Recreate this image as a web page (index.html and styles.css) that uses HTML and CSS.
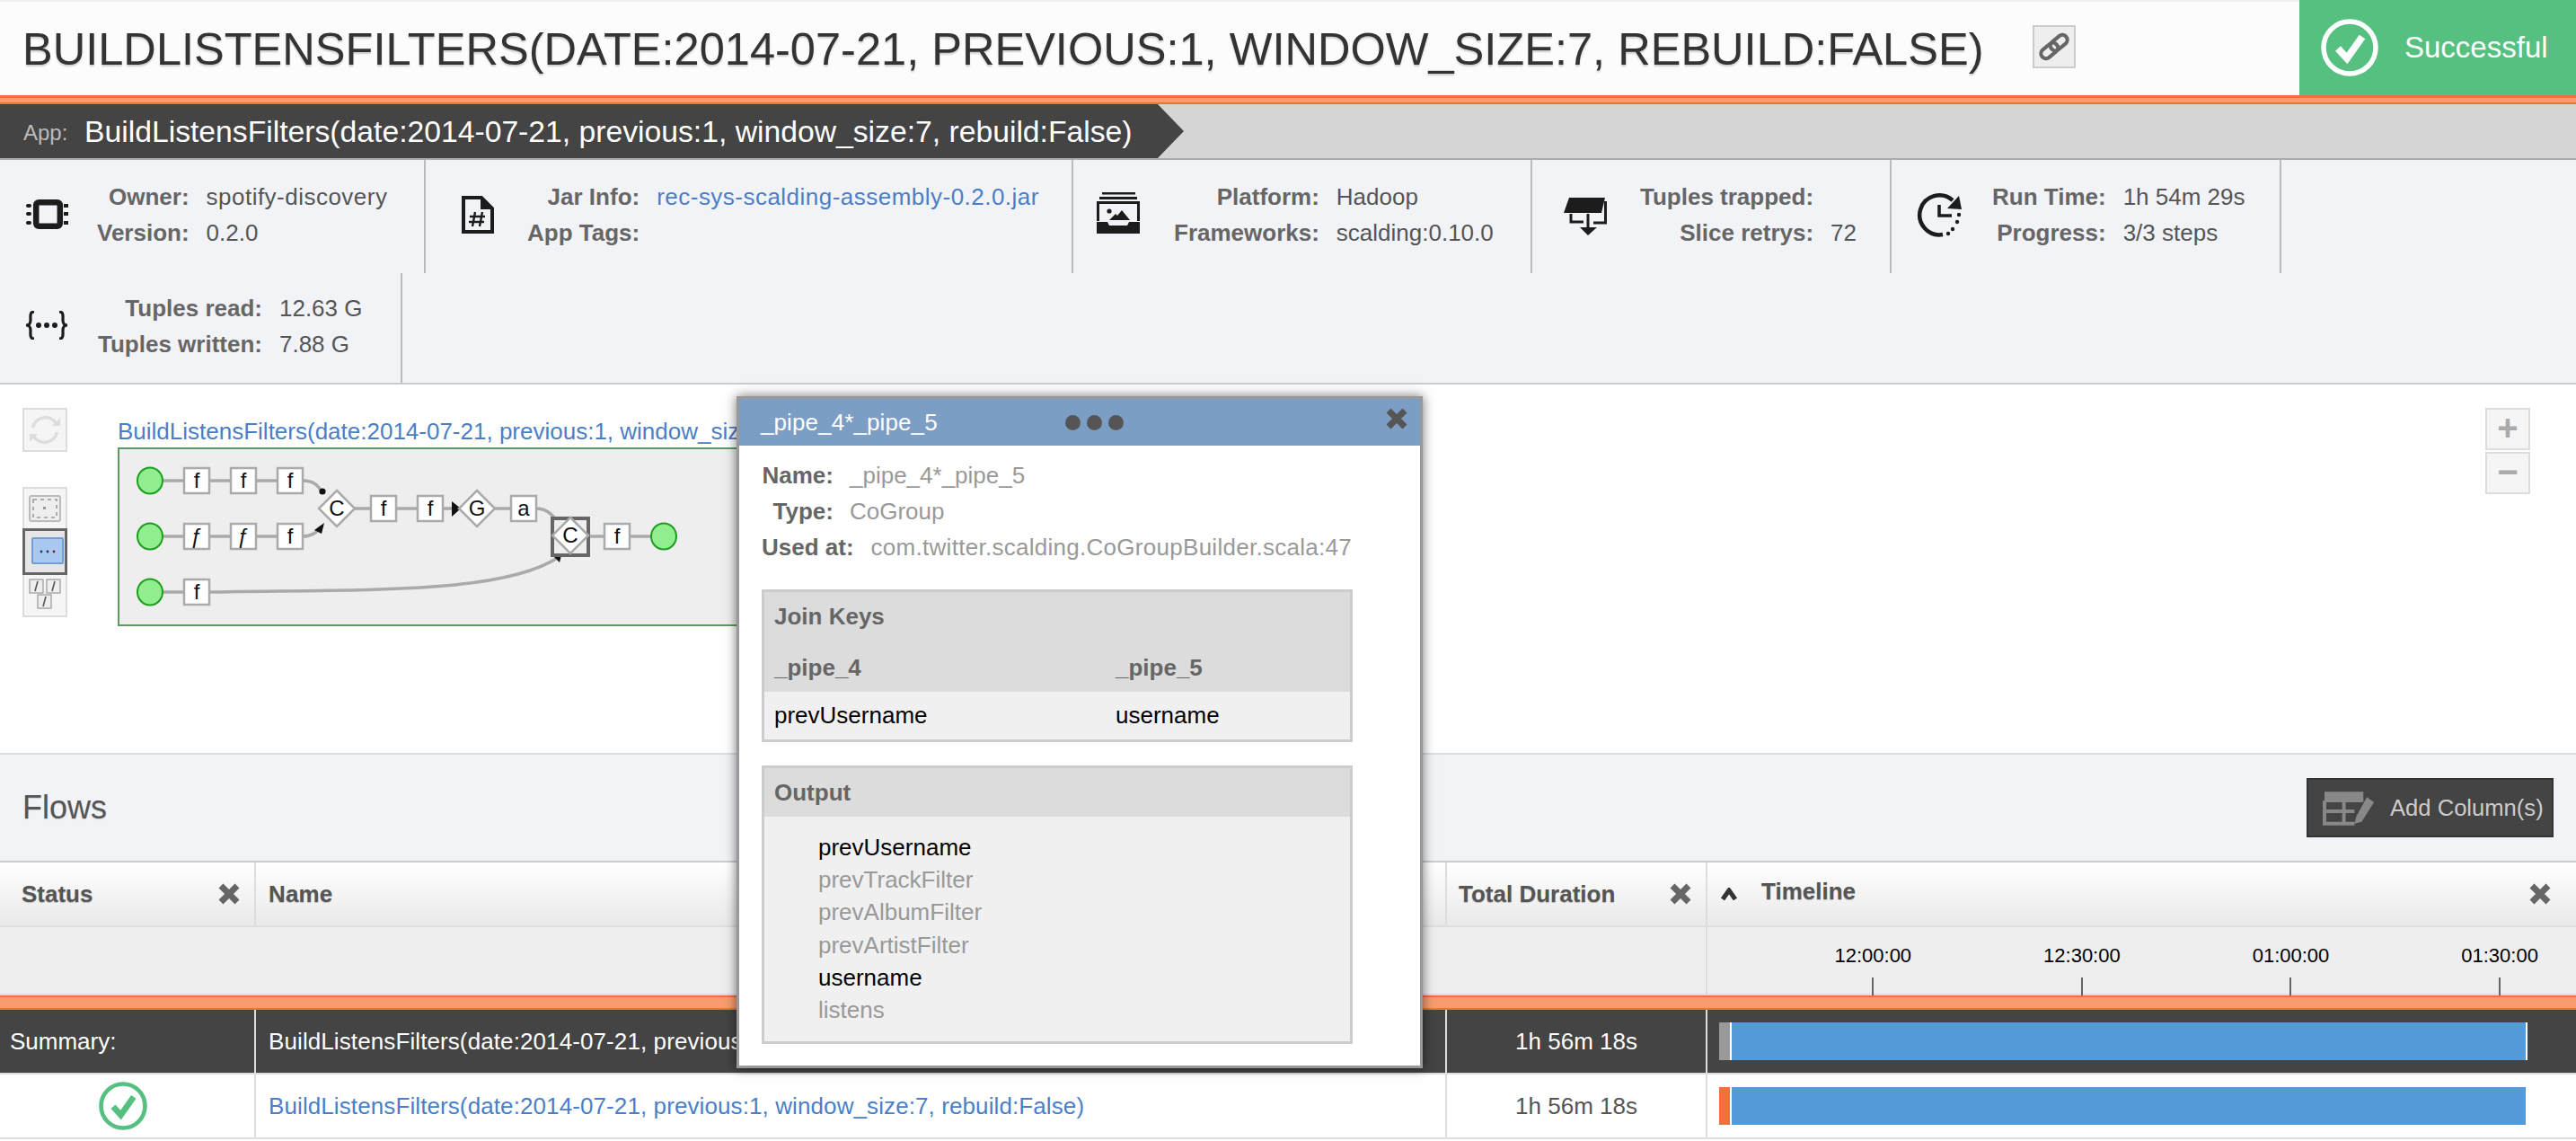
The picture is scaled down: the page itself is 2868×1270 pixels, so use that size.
FILE: index.html
```html
<!DOCTYPE html>
<html lang="en">
<head>
  <meta charset="UTF-8" />
  <title>BuildListensFilters</title>
  <link rel="stylesheet" href="styles.css">
</head>
<body>
  <svg class="defs" xmlns="http://www.w3.org/2000/svg">
    <symbol id="icon-x" viewBox="0 0 26 26">
      <path d="M4 4 L22 22 M22 4 L4 22" fill="none" stroke="currentColor" stroke-width="7"/>
    </symbol>
    <symbol id="icon-ok" viewBox="0 0 64 64">
      <circle cx="32" cy="32" r="29" fill="none" stroke="currentColor" stroke-width="5.5"/>
      <path d="M19 33 L29 44 L46 20" fill="none" stroke="currentColor" stroke-width="8"/>
    </symbol>
  </svg>

  <header class="top-bar">
    <h1 class="page-title">BuildListensFilters(date:2014-07-21, previous:1, window_size:7, rebuild:False)</h1>
    <span class="link-btn">
      <svg viewBox="0 0 48 48" xmlns="http://www.w3.org/2000/svg">
        <g fill="none" stroke="#666" stroke-width="4.5" transform="rotate(-40 24 24)">
          <rect x="5" y="18" width="23" height="12" rx="6"/>
          <rect x="20" y="18" width="23" height="12" rx="6"/>
        </g>
      </svg>
    </span>
    <div class="status-badge">
      <svg class="status-badge-icon"><use href="#icon-ok"/></svg>
      <span>Successful</span>
    </div>
  </header>
  <div class="orange-band"></div>

  <div class="app-bar">
    <div class="app-crumb">
      <span class="app-crumb-label">App:</span>
      <span class="app-crumb-name">BuildListensFilters(date:2014-07-21, previous:1, window_size:7, rebuild:False)</span>
    </div>
  </div>

  <section class="meta">
    <div class="meta-cell meta-owner">
      <svg class="meta-icon" viewBox="0 0 48 40" xmlns="http://www.w3.org/2000/svg">
        <rect x="12.2" y="7.2" width="26.6" height="26.6" rx="3" fill="none" stroke="#1c1c1c" stroke-width="6.5"/>
        <g fill="#1c1c1c">
          <rect x="1" y="9" width="6" height="4" rx="2"/><rect x="1" y="18" width="6" height="4" rx="2"/><rect x="1" y="28" width="6" height="4" rx="2"/>
          <rect x="43" y="9" width="5" height="4"/><rect x="43" y="18" width="5" height="4"/><rect x="43" y="28" width="5" height="4"/>
        </g>
      </svg>
      <dl class="meta-list">
        <dt>Owner:</dt><dd class="meta-wide">spotify-discovery</dd>
        <dt>Version:</dt><dd>0.2.0</dd>
      </dl>
    </div>
    <div class="meta-cell meta-jar">
      <svg class="meta-icon" viewBox="0 0 36 42" xmlns="http://www.w3.org/2000/svg">
        <path d="M2 2 H22 L34 14 V40 H2 Z" fill="none" stroke="#1c1c1c" stroke-width="4"/>
        <path d="M21 2 V15 H34 Z" fill="#1c1c1c"/>
        <path d="M15 18 L12 34 M23 18 L20 34 M9 23 H26 M8 29 H25" fill="none" stroke="#1c1c1c" stroke-width="2.4"/>
      </svg>
      <dl class="meta-list">
        <dt>Jar Info:</dt><dd class="meta-wide"><a class="link" href="#">rec-sys-scalding-assembly-0.2.0.jar</a></dd>
        <dt>App Tags:</dt><dd></dd>
      </dl>
    </div>
    <div class="meta-cell meta-platform">
      <svg class="meta-icon" viewBox="0 0 48 48" xmlns="http://www.w3.org/2000/svg">
        <rect x="6" y="1" width="37" height="2.5" fill="#1c1c1c"/>
        <rect x="3" y="6" width="42" height="3" fill="#1c1c1c"/>
        <path d="M1.5 33 V12.5 H46.5 V33" fill="none" stroke="#1c1c1c" stroke-width="3"/>
        <path d="M14 32 L21 25 L23 27 L28 21 L37 32 Z" fill="#1c1c1c"/>
        <circle cx="14" cy="22" r="2.6" fill="#1c1c1c"/>
        <path d="M0 34 H12 L14 38 H34 L36 34 H48 V47 H0 Z" fill="#1c1c1c"/>
      </svg>
      <dl class="meta-list">
        <dt>Platform:</dt><dd>Hadoop</dd>
        <dt>Frameworks:</dt><dd>scalding:0.10.0</dd>
      </dl>
    </div>
    <div class="meta-cell meta-trapped">
      <svg class="meta-icon" viewBox="0 0 48 44" xmlns="http://www.w3.org/2000/svg">
        <path d="M6 1 H46 L42 18 H0 Z" fill="#1c1c1c"/>
        <path d="M46.5 5 V29 H33 M8 19 V28 H22 M27 19 V35" fill="none" stroke="#1c1c1c" stroke-width="3"/>
        <path d="M18 34 H37 L27 43 Z" fill="#1c1c1c"/>
      </svg>
      <dl class="meta-list">
        <dt>Tuples trapped:</dt><dd></dd>
        <dt>Slice retrys:</dt><dd>72</dd>
      </dl>
    </div>
    <div class="meta-cell meta-time">
      <svg class="meta-icon" viewBox="0 0 50 50" xmlns="http://www.w3.org/2000/svg">
        <path d="M40 9 A22 22 0 1 0 29 47" fill="none" stroke="#1c1c1c" stroke-width="4.5"/>
        <path d="M47 4 L50 19 L34 18 Z" fill="#1c1c1c"/>
        <path d="M25 14 V26 H39" fill="none" stroke="#1c1c1c" stroke-width="3.6"/>
        <g fill="#1c1c1c"><circle cx="47" cy="25" r="2.2"/><circle cx="45" cy="33" r="2.2"/><circle cx="40" cy="41" r="2.2"/><circle cx="35" cy="46" r="2.2"/></g>
      </svg>
      <dl class="meta-list">
        <dt>Run Time:</dt><dd>1h 54m 29s</dd>
        <dt>Progress:</dt><dd>3/3 steps</dd>
      </dl>
    </div>
    <div class="meta-cell meta-tuples">
      <svg class="meta-icon" viewBox="0 0 48 32" xmlns="http://www.w3.org/2000/svg">
        <path d="M10 1 C5 1 6 6 6 10 C6 14 5 16 1 16 C5 16 6 18 6 22 C6 26 5 31 10 31" fill="none" stroke="#1c1c1c" stroke-width="3.2"/>
        <path d="M38 1 C43 1 42 6 42 10 C42 14 43 16 47 16 C43 16 42 18 42 22 C42 26 43 31 38 31" fill="none" stroke="#1c1c1c" stroke-width="3.2"/>
        <g fill="#1c1c1c"><circle cx="15" cy="16" r="3"/><circle cx="24" cy="16" r="3"/><circle cx="33" cy="16" r="3"/></g>
      </svg>
      <dl class="meta-list">
        <dt>Tuples read:</dt><dd>12.63 G</dd>
        <dt>Tuples written:</dt><dd>7.88 G</dd>
      </dl>
    </div>
  </section>

  <section class="graph-panel">
    <div class="graph-tools">
      <span class="tool-btn tool-refresh">
        <svg viewBox="0 0 50 50" xmlns="http://www.w3.org/2000/svg">
          <path d="M10 22 A16 16 0 0 1 39 17 M40 28 A16 16 0 0 1 11 33" fill="none" stroke="#ddd" stroke-width="4"/>
          <path d="M34 20 H44 V10 Z M16 30 H6 V40 Z" fill="#ddd"/>
        </svg>
      </span>
      <div class="tool-group">
        <span class="tool-view">
          <svg viewBox="0 0 36 30" xmlns="http://www.w3.org/2000/svg">
            <rect x="1" y="1" width="34" height="28" rx="2" fill="#eee" stroke="#bbb" stroke-width="2"/>
            <rect x="5" y="5" width="26" height="20" fill="none" stroke="#999" stroke-width="1.6" stroke-dasharray="4 4"/>
            <rect x="16" y="13" width="3" height="3" fill="#999"/>
          </svg>
        </span>
        <span class="tool-view tool-view-active">
          <svg viewBox="0 0 36 30" xmlns="http://www.w3.org/2000/svg">
            <rect x="1" y="1" width="34" height="28" rx="1" fill="#a9c9f0" stroke="#6f9fdb" stroke-width="2"/>
            <circle cx="11" cy="16" r="1.4" fill="#335"/><circle cx="18" cy="16" r="1.4" fill="#335"/><circle cx="25" cy="16" r="1.4" fill="#722"/>
          </svg>
        </span>
        <span class="tool-view tool-view-split">
          <svg viewBox="0 0 36 34" xmlns="http://www.w3.org/2000/svg">
            <g fill="#eee" stroke="#aaa" stroke-width="1.5">
              <rect x="1" y="1" width="15" height="15"/><rect x="20" y="1" width="15" height="15"/><rect x="10" y="18" width="15" height="15"/>
            </g>
            <path d="M10 3 L7 14 M29 3 L26 14 M19 20 L16 31" stroke="#555" stroke-width="1.6"/>
          </svg>
        </span>
      </div>
    </div>
    <div class="graph-body">
      <a class="link graph-title" href="#">BuildListensFilters(date:2014-07-21, previous:1, window_size:7, rebuild:False)</a>
      <svg class="graph" viewBox="131 498 760 200" xmlns="http://www.w3.org/2000/svg">
        <rect class="graph-box" x="132" y="499" width="758" height="197"/>
        <g class="edges">
          <path d="M181 535 H204 M233 535 H257 M285 535 H309 M337 535 C349 535 354 540 358 547"/>
          <path d="M181 597 H204 M233 597 H257 M285 597 H309 M337 597 C347 597 352 593 358 586"/>
          <path d="M181 659 H204 M233 659 C400 656 560 662 622 620"/>
          <path d="M395 566 H413 M441 566 H465 M493 566 H505 M551 566 H569 M597 566 C608 566 614 572 620 580"/>
          <path d="M655 597 H673 M701 597 H725"/>
        </g>
        <g class="edge-heads">
          <circle cx="359" cy="547" r="3.6"/>
          <path d="M361 582 L350 590 L358 594 Z"/>
          <path d="M513 566 L503 558 V575 Z"/>
          <circle cx="620" cy="580" r="3"/>
          <path d="M625 618 L616 619 L623 626 Z"/>
        </g>
        <g class="node-start">
          <ellipse cx="167" cy="535" rx="14" ry="14.5"/>
          <ellipse cx="167" cy="597" rx="14" ry="14.5"/>
          <ellipse cx="167" cy="659" rx="14" ry="14.5"/>
          <ellipse cx="739" cy="597" rx="14" ry="14.5"/>
        </g>
        <g class="node-box">
          <rect x="205" y="521" width="28" height="28"/><rect x="257" y="521" width="28" height="28"/><rect x="309" y="521" width="28" height="28"/>
          <rect x="205" y="583" width="28" height="28"/><rect x="257" y="583" width="28" height="28"/><rect x="309" y="583" width="28" height="28"/>
          <rect x="205" y="645" width="28" height="28"/>
          <rect x="413" y="552" width="28" height="28"/><rect x="465" y="552" width="28" height="28"/>
          <rect x="569" y="552" width="28" height="28"/><rect x="673" y="583" width="28" height="28"/>
        </g>
        <rect class="node-selected" x="615" y="577" width="40" height="41"/>
        <g class="node-box">
          <path d="M375 546 L395 566 L375 586 L355 566 Z"/>
          <path d="M531 546 L551 566 L531 586 L511 566 Z"/>
          <path d="M635 576 L655 596 L635 616 L615 596 Z"/>
        </g>
        <g class="node-label">
          <text x="219" y="543">f</text><text x="271" y="543">f</text><text x="323" y="543">f</text>
          <text x="219" y="605">ƒ</text><text x="271" y="605">ƒ</text><text x="323" y="605">f</text>
          <text x="219" y="667">f</text>
          <text x="375" y="574">C</text><text x="427" y="574">f</text><text x="479" y="574">f</text>
          <text x="531" y="574">G</text><text x="583" y="574">a</text>
          <text x="635" y="604">C</text><text x="687" y="605">f</text>
        </g>
      </svg>
    </div>
    <div class="zoom-tools">
      <span class="zoom-btn">+</span>
      <span class="zoom-btn">−</span>
    </div>
  </section>

  <section class="flows-head">
    <h2 class="flows-title">Flows</h2>
    <button class="add-column">
      <svg class="add-column-icon" viewBox="0 0 62 40" xmlns="http://www.w3.org/2000/svg">
        <path d="M2 2 H46 V12 H2 Z" fill="#888"/>
        <path d="M2 12 H46 M2 24 H36 M2 12 V38 H36 M24 12 V38" fill="none" stroke="#888" stroke-width="4"/>
        <path d="M50 8 L58 14 L44 36 L36 38 L38 30 Z" fill="#888"/>
      </svg>
      <span>Add Column(s)</span>
    </button>
  </section>

  <div class="flow-table">
    <div class="flow-row flow-row-head">
      <div class="flow-cell flow-cell-status"><span>Status</span><svg class="col-close"><use href="#icon-x"/></svg></div>
      <div class="flow-cell flow-cell-name"><span>Name</span></div>
      <div class="flow-cell flow-cell-duration"><span>Total Duration</span><svg class="col-close"><use href="#icon-x"/></svg></div>
      <div class="flow-cell flow-cell-timeline">
        <svg class="sort-up" viewBox="0 0 20 14" xmlns="http://www.w3.org/2000/svg"><path d="M3 13 L10 3 L17 13" fill="none" stroke="#333" stroke-width="5"/></svg>
        <span class="timeline-label">Timeline</span>
        <svg class="col-close"><use href="#icon-x"/></svg>
      </div>
    </div>
    <div class="flow-row flow-row-scale">
      <div></div><div></div><div></div>
      <div class="scale">
        <div class="scale-tick"><span>12:00:00</span><i></i></div>
        <div class="scale-tick"><span>12:30:00</span><i></i></div>
        <div class="scale-tick"><span>01:00:00</span><i></i></div>
        <div class="scale-tick"><span>01:30:00</span><i></i></div>
      </div>
    </div>
    <div class="table-band"></div>
    <div class="flow-row flow-row-summary">
      <div class="flow-cell flow-cell-summary">Summary:</div>
      <div class="flow-cell flow-cell-name">BuildListensFilters(date:2014-07-21, previous:1, window_size:7, rebuild:False)</div>
      <div class="flow-cell flow-cell-center">1h 56m 18s</div>
      <div class="flow-cell flow-cell-bar">
        <div class="bar">
          <span class="bar-wait"></span><span class="bar-run"></span>
        </div>
      </div>
    </div>
    <div class="flow-row flow-row-item">
      <div class="flow-cell flow-cell-check"><svg class="row-ok"><use href="#icon-ok"/></svg></div>
      <div class="flow-cell flow-cell-name"><a class="link" href="#">BuildListensFilters(date:2014-07-21, previous:1, window_size:7, rebuild:False)</a></div>
      <div class="flow-cell flow-cell-center">1h 56m 18s</div>
      <div class="flow-cell flow-cell-bar">
        <div class="bar bar-item">
          <span class="bar-wait"></span><span class="bar-run"></span>
        </div>
      </div>
    </div>
  </div>

  <aside class="popup">
    <div class="popup-head">
      <span class="popup-title">_pipe_4*_pipe_5</span>
      <span class="popup-grip"><i></i><i></i><i></i></span>
      <svg class="popup-close"><use href="#icon-x"/></svg>
    </div>
    <div class="popup-body">
      <dl class="popup-details">
        <dt>Name:</dt><dd>_pipe_4*_pipe_5</dd>
        <dt>Type:</dt><dd>CoGroup</dd>
      </dl>
      <div class="popup-used"><b>Used at:</b><span>com.twitter.scalding.CoGroupBuilder.scala:47</span></div>

      <div class="popup-box">
        <div class="popup-box-head">
          <div class="popup-box-title popup-box-title-tall">Join Keys</div>
          <div class="keys-row keys-row-head"><span>_pipe_4</span><span>_pipe_5</span></div>
        </div>
        <div class="keys-row"><span>prevUsername</span><span>username</span></div>
      </div>

      <div class="popup-box popup-box-output">
        <div class="popup-box-head">
          <div class="popup-box-title">Output</div>
        </div>
        <ul class="output-list">
          <li class="on">prevUsername</li>
          <li>prevTrackFilter</li>
          <li>prevAlbumFilter</li>
          <li>prevArtistFilter</li>
          <li class="on">username</li>
          <li>listens</li>
        </ul>
      </div>
    </div>
  </aside>
</body>
</html>
```

FILE: styles.css
```css
* {
  box-sizing: border-box;
}
html, body {
  margin: 0;
  padding: 0;
}
body {
  position: relative;
  width: 2868px;
  height: 1270px;
  overflow: hidden;
  background: #fff;
  font-family: "Liberation Sans", Arial, sans-serif;
  font-size: 26px;
  color: #555;
}
.defs {
  position: absolute;
  width: 0;
  height: 0;
}
.link {
  color: #4a7fc7;
  text-decoration: none;
}

/* top */
.top-bar {
  display: flex;
  align-items: center;
  height: 106px;
  padding-left: 25px;
  background: #fcfcfc;
  border-top: 2px solid #eee;
}
.page-title {
  margin: 0;
  font-size: 50.55px;
  font-weight: normal;
  text-transform: uppercase;
  color: #333;
  text-shadow: 0 2px 2px #ccc;
  white-space: nowrap;
}
.link-btn {
  display: flex;
  width: 48px;
  height: 48px;
  margin-left: 54px;
  margin-top: -4px;
  background: #eee;
  border: 2px solid #ccc;
}
.link-btn svg {
  width: 100%;
  height: 100%;
}
.status-badge {
  display: flex;
  align-items: center;
  gap: 29px;
  width: 308px;
  height: 106px;
  margin-top: -2px;
  margin-left: auto;
  padding-left: 24px;
  background: #56c080;
  color: #fff;
  font-size: 33px;
}
.status-badge-icon {
  width: 64px;
  height: 64px;
}
.orange-band {
  height: 10px;
  background: #f99b6f;
  border-top: 3px solid #f3703a;
  border-bottom: 2px solid #f3703a;
}
.app-bar {
  height: 62px;
  background: #d5d5d5;
  border-bottom: 2px solid #aaa;
}
.app-crumb {
  display: flex;
  align-items: center;
  width: 1318px;
  height: 60px;
  padding-left: 26px;
  background: #444;
  clip-path: polygon(0 0, 1289px 0, 100% 50%, 1289px 100%, 0 100%);
  white-space: nowrap;
}
.app-crumb-label {
  width: 68px;
  color: #bbb;
  font-size: 24px;
  padding-top: 4px;
}
.app-crumb-name {
  color: #fff;
  font-size: 33.7px;
}

/* meta */
.meta {
  display: flex;
  flex-wrap: wrap;
  height: 250px;
  background: #f2f3f7;
  border-bottom: 2px solid #ccc;
}
.meta-cell {
  display: flex;
  align-items: flex-start;
  height: 126px;
  padding-top: 21px;
  border-right: 2px solid #bbb;
}
.meta-icon {
  flex: none;
}
.meta-list {
  display: grid;
  grid-template-columns: auto auto;
  justify-content: start;
  column-gap: 19px;
  margin: 0;
  line-height: 40px;
}
.meta-list dt {
  font-weight: bold;
  color: #666;
  text-align: right;
}
.meta-list dd {
  margin: 0;
  min-height: 40px;
}
.meta-list .meta-wide {
  letter-spacing: 0.48px;
}
.meta-owner {
  width: 474px;
  padding-left: 28px;
}
.meta-owner .meta-icon {
  width: 48px;
  height: 40px;
  margin: 19px 32px 0 0;
}
.meta-jar {
  width: 721px;
  padding-left: 40px;
}
.meta-jar .meta-icon {
  width: 36px;
  height: 42px;
  margin: 19px 37px 0 0;
}
.meta-platform {
  width: 511px;
  padding-left: 26px;
}
.meta-platform .meta-icon {
  width: 48px;
  height: 48px;
  margin: 14px 38px 0 0;
}
.meta-trapped {
  width: 400px;
  padding-left: 35px;
}
.meta-trapped .meta-icon {
  width: 48px;
  height: 44px;
  margin: 20px 37px 0 0;
}
.meta-time {
  width: 434px;
  padding-left: 28px;
}
.meta-time .meta-icon {
  width: 50px;
  height: 50px;
  margin: 15px 34px 0 0;
}
.meta-tuples {
  width: 448px;
  height: 122px;
  padding-left: 28px;
  padding-top: 19px;
}
.meta-tuples .meta-icon {
  width: 48px;
  height: 32px;
  margin: 23px 33px 0 0;
}

/* graph */
.graph-panel {
  display: flex;
  height: 412px;
  padding: 26px 51px 0 25px;
  border-bottom: 2px solid #ddd;
}
.graph-tools {
  display: flex;
  flex-direction: column;
  gap: 39px;
  width: 50px;
}
.tool-btn {
  display: block;
  height: 49px;
  background: #f5f5f5;
  border: 2px solid #ddd;
}
.tool-btn svg {
  display: block;
  width: 100%;
  height: 100%;
}
.tool-group {
  display: flex;
  flex-direction: column;
  height: 145px;
  background: #f5f5f5;
  border: 2px solid #ddd;
}
.tool-view {
  flex: 1;
  padding: 7px 5px;
}
.tool-view svg {
  display: block;
  width: 36px;
  height: 30px;
}
.tool-view-active {
  margin: -2px;
  padding: 7px 7px;
  background: #e6e6e6;
  border: 3px solid #666;
}
.tool-view-split {
  padding-top: 6px;
}
.tool-view-split svg {
  height: 34px;
}
.graph-body {
  margin-left: 56px;
  padding-top: 8px;
}
.graph-title {
  display: block;
  line-height: 36px;
  white-space: nowrap;
}
.graph {
  display: block;
  width: 760px;
  height: 200px;
}
.graph-box {
  fill: #eee;
  stroke: #5f9a63;
  stroke-width: 2;
}
.edges {
  fill: none;
  stroke: #aaa;
  stroke-width: 3.5;
}
.edge-heads {
  fill: #111;
}
.node-start {
  fill: #90ee90;
  stroke: #1c9e1c;
  stroke-width: 2;
}
.node-box {
  fill: #fff;
  stroke: #aaa;
  stroke-width: 2.5;
}
.node-selected {
  fill: #eee;
  stroke: #666;
  stroke-width: 4;
}
.node-label {
  fill: #111;
  font-size: 24px;
  text-anchor: middle;
}
.zoom-tools {
  display: flex;
  flex-direction: column;
  gap: 2px;
  margin-left: auto;
}
.zoom-btn {
  width: 50px;
  height: 47px;
  background: #f5f5f5;
  border: 2px solid #ddd;
  color: #aaa;
  font-size: 40px;
  font-weight: bold;
  line-height: 40px;
  text-align: center;
}

/* flows */
.flows-head {
  display: flex;
  align-items: center;
  justify-content: space-between;
  height: 120px;
  padding: 0 25px;
  background: #f2f3f7;
  border-bottom: 2px solid #ccc;
}
.flows-title {
  margin: 0;
  font-size: 36px;
  font-weight: normal;
  color: #555;
  text-shadow: 0 1px 1px #ccc;
}
.add-column {
  display: flex;
  align-items: center;
  gap: 14px;
  width: 275px;
  height: 66px;
  padding: 0 0 0 16px;
  background: #444;
  border: 2px solid #333;
  color: #ccc;
  font: inherit;
  font-size: 25.6px;
  white-space: nowrap;
}
.add-column-icon {
  width: 61px;
  height: 40px;
}
.flow-row {
  display: grid;
  grid-template-columns: 283px 1326px 290px 1fr;
}
.flow-cell {
  display: flex;
  align-items: center;
  border-left: 2px solid #ddd;
  white-space: nowrap;
}
.flow-cell:first-child {
  border-left: 0;
}
.flow-row-head {
  height: 72px;
  background: linear-gradient(#fff, #e9e9e9);
  border-bottom: 2px solid #ddd;
  font-weight: bold;
  color: #555;
  text-shadow: 0 1px 1px #bbb;
}
.flow-cell-status {
  justify-content: space-between;
  padding: 0 15px 0 24px;
}
.flow-cell-name {
  padding-left: 14px;
  letter-spacing: 0.1px;
}
.flow-cell-duration {
  justify-content: space-between;
  padding: 0 15px 0 13px;
}
.flow-cell-timeline {
  padding: 0 27px 0 14px;
}
.sort-up {
  width: 20px;
  height: 14px;
  margin-right: 26px;
}
.timeline-label {
  margin: 0 auto 6px 0;
}
.col-close {
  width: 26px;
  height: 26px;
  color: #666;
}
.flow-row-scale {
  height: 76px;
  background: #eee;
}
.scale {
  display: flex;
  padding: 18px 0 0 68px;
  border-left: 2px solid #ddd;
}
.scale-tick {
  display: flex;
  flex-direction: column;
  align-items: center;
  width: 232.6px;
  color: #000;
  font-size: 22px;
  line-height: 28px;
}
.scale-tick i {
  width: 2px;
  height: 20px;
  margin-top: 10px;
  background: #666;
}
.table-band {
  height: 16px;
  background: #f99b6f;
  border-top: 2px solid #f3703a;
  border-bottom: 2px solid #f3703a;
  box-shadow: 0 -2px 0 #ddd;
}
.flow-row-summary {
  height: 72px;
  background: #444;
  border-bottom: 2px solid #ddd;
  color: #fff;
}
.flow-cell-summary {
  padding-left: 11px;
}
.flow-row-item {
  height: 72px;
  border-bottom: 2px solid #ddd;
}
.flow-cell-center {
  justify-content: center;
}
.flow-cell-check {
  justify-content: center;
}
.row-ok {
  width: 54px;
  height: 54px;
  margin-right: 9px;
  color: #56c080;
}
.flow-cell-bar {
  padding-left: 13px;
}
.bar {
  display: flex;
  width: 900px;
  height: 42px;
  border-right: 2px solid #fff;
}
.bar-item {
  width: 898px;
  border-right: 0;
}
.bar-wait {
  width: 14px;
  background: #999;
  border-right: 2px solid #fff;
}
.bar-item .bar-wait {
  background: #f3703a;
}
.bar-run {
  flex: 1;
  background: #559bd9;
}

/* popup */
.popup {
  position: absolute;
  top: 441px;
  left: 820px;
  width: 764px;
  background: #fff;
  border: 3px solid #999;
  box-shadow: 0 0 12px rgba(0, 0, 0, 0.55);
}
.popup-head {
  display: flex;
  align-items: center;
  height: 52px;
  padding: 0 13px 0 24px;
  background: #7c9ec4;
  color: #fff;
}
.popup-title {
  width: 339px;
  letter-spacing: 0.1px;
}
.popup-grip {
  display: flex;
  gap: 7px;
}
.popup-grip i {
  width: 17px;
  height: 17px;
  border-radius: 50%;
  background: #555;
}
.popup-close {
  width: 26px;
  height: 26px;
  margin-left: auto;
  margin-top: -8px;
  color: #555;
}
.popup-body {
  padding: 13px 75px 24px 25px;
}
.popup-details {
  display: grid;
  grid-template-columns: 80px auto;
  column-gap: 18px;
  margin: 0;
  line-height: 40px;
}
.popup-details dt {
  font-weight: bold;
  color: #666;
  text-align: right;
}
.popup-details dd {
  margin: 0;
  color: #999;
}
.popup-used {
  display: flex;
  gap: 19px;
  margin-bottom: 27px;
  line-height: 40px;
  color: #999;
  white-space: nowrap;
}
.popup-used b {
  color: #666;
}
.popup-used span {
  letter-spacing: 0.28px;
}
.popup-box {
  background: #f0f0f0;
  border: 3px solid #ccc;
}
.popup-box-output {
  margin-top: 26px;
}
.popup-box-head {
  background: #dcdcdc;
  font-weight: bold;
  color: #666;
}
.popup-box-title {
  height: 54px;
  padding-left: 11px;
  line-height: 54px;
}
.popup-box-title-tall {
  height: 58px;
}
.keys-row {
  display: grid;
  grid-template-columns: 380px 1fr;
  height: 53px;
  padding-left: 11px;
  line-height: 53px;
  color: #000;
}
.keys-row-head {
  color: #666;
}
.output-list {
  margin: 0;
  padding: 16px 0 17px 60px;
  list-style: none;
  line-height: 36.2px;
  color: #999;
}
.output-list .on {
  color: #000;
}
```
